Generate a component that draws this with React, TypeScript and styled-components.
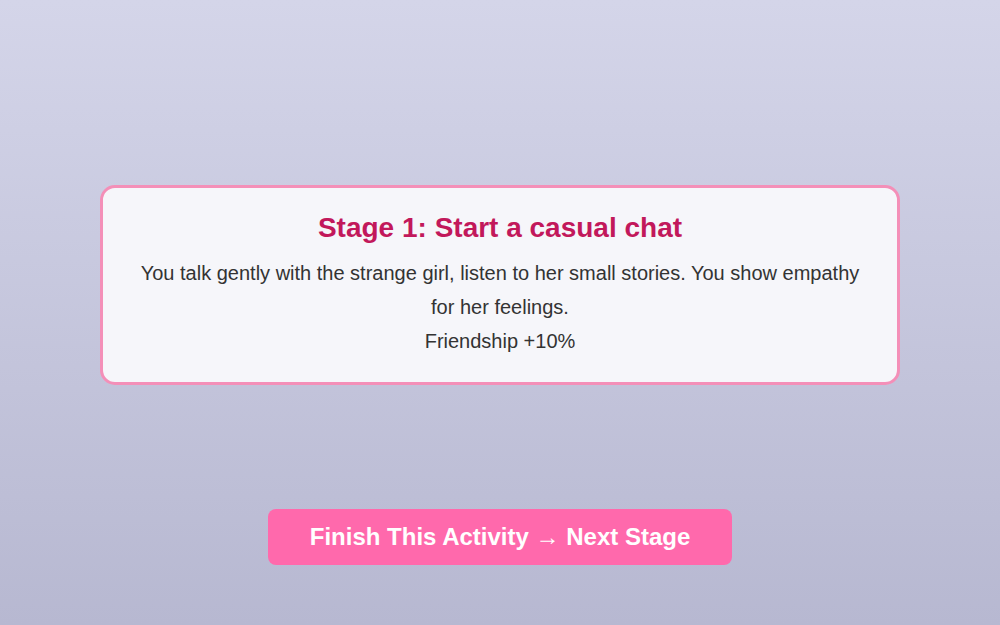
import React from "react";
import styled, { createGlobalStyle } from "styled-components";

const GlobalStyle = createGlobalStyle`
  html, body { margin: 0; padding: 0; }
  body {
    font-family: "Liberation Sans", Arial, sans-serif;
    background: linear-gradient(180deg, #d4d5e9 0%, #b7b8d1 100%);
    min-height: 625px;
  }
`;

const Page = styled.div`
  height: 625px;
  box-sizing: border-box;
  padding-top: 185px;
  display: flex;
  flex-direction: column;
  align-items: center;
  gap: 124px;
`;

const Card = styled.section`
  width: 800px;
  box-sizing: border-box;
  padding: 24px 30px 24px;
  background: #f6f6fa;
  border: 3px solid #f48fb8;
  border-radius: 15px;
  text-align: center;
`;

const Title = styled.h2`
  margin: 0 0 12px;
  font-size: 28px;
  font-weight: 700;
  color: #c2185b;
`;

const Body = styled.p`
  margin: 0;
  font-size: 20px;
  line-height: 34px;
  color: #333333;
`;

const NextButton = styled.button`
  width: 464px;
  height: 56px;
  border: none;
  border-radius: 8px;
  background: #ff69ac;
  color: #ffffff;
  font-family: "Liberation Sans", Arial, sans-serif;
  font-size: 24px;
  font-weight: 700;
  cursor: pointer;
`;

export default function App() {
  return (
    <>
      <GlobalStyle />
      <Page>
        <Card>
          <Title>Stage 1: Start a casual chat</Title>
          <Body>
            You talk gently with the strange girl, listen to her small stories. You show empathy for her feelings.
            <br />
            Friendship +10%
          </Body>
        </Card>
        <NextButton>Finish This Activity → Next Stage</NextButton>
      </Page>
    </>
  );
}
